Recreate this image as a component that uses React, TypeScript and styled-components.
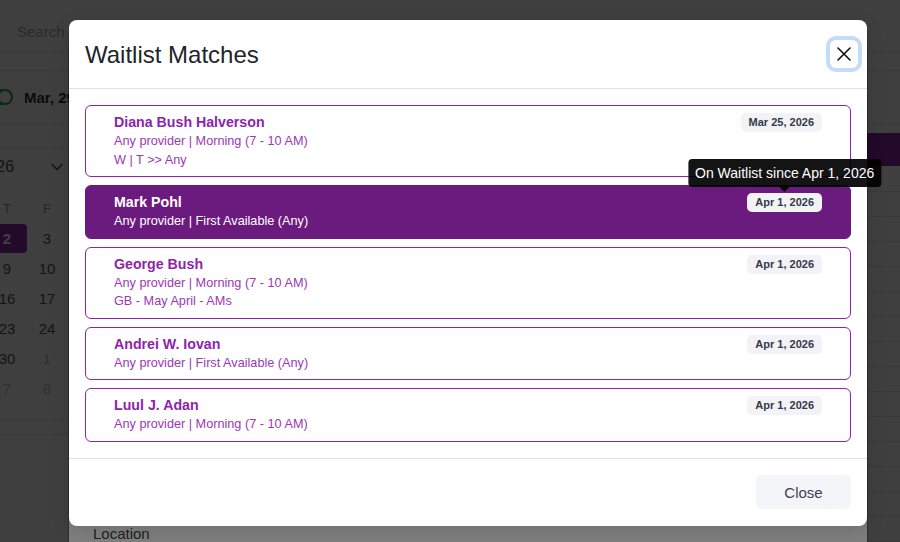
import React from "react";
import styled, { createGlobalStyle } from "styled-components";

const PURPLE = "#8e24aa";
const ACTIVE = "#6b1b7e";

const GlobalStyle = createGlobalStyle`
  html, body { margin: 0; padding: 0; background: #fff; }
  body { font-family: "Liberation Sans", Arial, sans-serif; overflow: hidden; }
  * { box-sizing: border-box; }
`;

const Viewport = styled.div`
  position: relative;
  width: 900px;
  height: 542px;
  overflow: hidden;
  background: #fff;
`;

/* ---------- base page (behind two backdrops) ---------- */
const Page = styled.div`
  display: flex;
  flex-direction: column;
  height: 100%;
  color: #555;
`;

const SearchBar = styled.div`
  height: 53px;
  border-bottom: 1px solid #e2e2e2;
  display: flex;
  align-items: center;
  padding: 10px 0 0 17px;
  font-size: 15px;
  color: #a8a8a8;
  white-space: nowrap;
`;

const SubBar = styled.div`
  height: 18px;
  border-bottom: 1px solid #e2e2e2;
`;

const DateBar = styled.div`
  height: 53px;
  border-bottom: 1px solid #e2e2e2;
  display: flex;
  align-items: center;
  gap: 11px;
  white-space: nowrap;
`;

const Toggle = styled.span`
  position: relative;
  width: 32px;
  height: 16px;
  border-radius: 8px;
  background: #28a745;
  margin-left: -19px;
  flex-shrink: 0;
  &::after {
    content: "";
    position: absolute;
    right: 2px;
    top: 2px;
    width: 12px;
    height: 12px;
    border-radius: 50%;
    background: #fff;
  }
`;

const DateLabel = styled.span`
  font-size: 15px;
  font-weight: 700;
  color: #333;
`;

const Main = styled.div`
  display: flex;
  flex: 1;
`;

const Sidebar = styled.div`
  width: 300px;
  flex-shrink: 0;
  display: flex;
  flex-direction: column;
`;

const SideTop = styled.div`
  height: 24px;
  border-bottom: 1px solid #e2e2e2;
`;

const Calendar = styled.div`
  margin-left: -173px;
  width: 280px;
`;

const MonthHeader = styled.div`
  height: 38px;
  display: flex;
  align-items: center;
  gap: 37px;
  padding-left: 115px;
  font-size: 16px;
  color: #555;
`;

const WeekRow = styled.div`
  margin-top: 7px;
  height: 30px;
  display: grid;
  grid-template-columns: repeat(7, 40px);
  align-items: center;
  justify-items: center;
  font-size: 13px;
  color: #999;
`;

const DayGrid = styled.div`
  display: grid;
  grid-template-columns: repeat(7, 40px);
  grid-auto-rows: 30px;
`;

const Day = styled.div<{ $muted?: boolean; $selected?: boolean }>`
  display: flex;
  align-items: center;
  justify-content: center;
  font-size: 15px;
  margin-top: ${(p) => (p.$selected ? "1px" : "0")};
  border-radius: 4px;
  color: ${(p) => (p.$selected ? "#fff" : p.$muted ? "#c4c4c4" : "#555")};
  background: ${(p) => (p.$selected ? PURPLE : "transparent")};
  font-weight: ${(p) => (p.$selected ? 700 : 400)};
`;

const SideFooter = styled.div`
  margin-top: 16px;
  height: 16px;
  border-top: 1px solid #e2e2e2;
  border-bottom: 1px solid #e2e2e2;
`;

const Schedule = styled.div`
  flex: 1;
  padding-top: 9px;
  display: flex;
  flex-direction: column;
`;

const DayHead = styled.div`
  height: 33px;
  background: ${PURPLE};
  margin-bottom: 1px;
`;

const Slot = styled.div`
  height: 25px;
  border-bottom: 1px solid #e2e2e2;
  flex-shrink: 0;
`;

/* ---------- layers ---------- */
const Backdrop = styled.div`
  position: absolute;
  inset: 0;
  background: rgba(0, 0, 0, 0.5);
`;

const UnderModal = styled.div`
  position: absolute;
  left: 69px;
  top: 28px;
  width: 798px;
  height: 560px;
  background: #fff;
  border-radius: 8px;
  box-shadow: 0 0 0 1px rgba(0, 0, 0, 0.25);
  padding: 497px 24px 0;
`;

const FieldLabel = styled.div`
  font-size: 15px;
  line-height: 18px;
  color: #444;
`;

const Modal = styled.div`
  position: absolute;
  left: 69px;
  top: 20px;
  width: 798px;
  background: #fff;
  border-radius: 8px;
  display: flex;
  flex-direction: column;
  box-shadow: 0 6px 18px rgba(0, 0, 0, 0.12);
`;

const Header = styled.div`
  height: 69px;
  border-bottom: 1px solid #dee2e6;
  display: flex;
  align-items: center;
  justify-content: space-between;
  padding: 0 9px 0 16px;
`;

const Title = styled.h2`
  margin: 0;
  font-size: 24px;
  font-weight: 400;
  line-height: 29px;
  color: #212529;
`;

const IconButton = styled.button`
  width: 28px;
  height: 28px;
  padding: 0;
  border: none;
  border-radius: 6px;
  background: #fff;
  box-shadow: 0 0 0 4px #c5dbfb;
  display: flex;
  align-items: center;
  justify-content: center;
  cursor: pointer;
`;

const Body = styled.div`
  padding: 16px;
  display: flex;
  flex-direction: column;
  gap: 8px;
`;

const Item = styled.div<{ $active?: boolean }>`
  display: flex;
  justify-content: space-between;
  align-items: flex-start;
  border: 1px solid ${(p) => (p.$active ? ACTIVE : PURPLE)};
  background: ${(p) => (p.$active ? ACTIVE : "#fff")};
  border-radius: 6px;
  padding: 7px 28px;
`;

const Info = styled.div`
  display: flex;
  flex-direction: column;
`;

const Name = styled.div<{ $active?: boolean }>`
  font-size: 14.2px;
  font-weight: 700;
  line-height: 19px;
  color: ${(p) => (p.$active ? "#fff" : PURPLE)};
`;

const Detail = styled.div<{ $active?: boolean }>`
  font-size: 12.7px;
  line-height: 18.5px;
  color: ${(p) => (p.$active ? "#fff" : "#9b38b4")};
`;

const BadgeWrap = styled.div`
  position: relative;
  flex-shrink: 0;
`;

const Badge = styled.span`
  display: block;
  background: #f2f3f7;
  color: #343a48;
  font-size: 11px;
  font-weight: 700;
  line-height: 13px;
  padding: 3px 8px;
  border-radius: 5px;
  white-space: nowrap;
`;

const Tooltip = styled.div`
  position: absolute;
  bottom: calc(100% + 6px);
  left: 50%;
  transform: translateX(-50%);
  background: rgba(0, 0, 0, 0.92);
  color: #fff;
  font-size: 14px;
  line-height: 20px;
  padding: 4px 7px;
  border-radius: 4px;
  white-space: nowrap;
  &::after {
    content: "";
    position: absolute;
    top: 100%;
    left: 50%;
    margin-left: -5px;
    border: 5px solid transparent;
    border-top-color: rgba(0, 0, 0, 0.92);
  }
`;

const Footer = styled.div`
  height: 68px;
  border-top: 1px solid #dee2e6;
  display: flex;
  align-items: center;
  justify-content: flex-end;
  padding: 0 16px;
`;

const CloseButton = styled.button`
  width: 95px;
  height: 34px;
  border: none;
  border-radius: 6px;
  background: #f4f5f9;
  color: #3f4254;
  font-family: inherit;
  font-size: 15px;
  cursor: pointer;
`;

type Match = {
  name: string;
  lines: string[];
  date: string;
  active?: boolean;
  tooltip?: string;
};

const matches: Match[] = [
  {
    name: "Diana Bush Halverson",
    lines: ["Any provider | Morning (7 - 10 AM)", "W | T >> Any"],
    date: "Mar 25, 2026",
  },
  {
    name: "Mark Pohl",
    lines: ["Any provider | First Available (Any)"],
    date: "Apr 1, 2026",
    active: true,
    tooltip: "On Waitlist since Apr 1, 2026",
  },
  {
    name: "George Bush",
    lines: ["Any provider | Morning (7 - 10 AM)", "GB - May April - AMs"],
    date: "Apr 1, 2026",
  },
  {
    name: "Andrei W. Iovan",
    lines: ["Any provider | First Available (Any)"],
    date: "Apr 1, 2026",
  },
  {
    name: "Luul J. Adan",
    lines: ["Any provider | Morning (7 - 10 AM)"],
    date: "Apr 1, 2026",
  },
];

type CalDay = { d: number; muted?: boolean; selected?: boolean };
const weeks: CalDay[][] = [
  [{ d: 29, muted: true }, { d: 30, muted: true }, { d: 31, muted: true }, { d: 1 }, { d: 2, selected: true }, { d: 3 }, { d: 4 }],
  [5, 6, 7, 8, 9, 10, 11].map((d) => ({ d })),
  [12, 13, 14, 15, 16, 17, 18].map((d) => ({ d })),
  [19, 20, 21, 22, 23, 24, 25].map((d) => ({ d })),
  [{ d: 26 }, { d: 27 }, { d: 28 }, { d: 29 }, { d: 30 }, { d: 1, muted: true }, { d: 2, muted: true }],
  [3, 4, 5, 6, 7, 8, 9].map((d) => ({ d, muted: true })),
];

const XIcon = () => (
  <svg width="14" height="14" viewBox="0 0 14 14" fill="none">
    <path d="M1 1L13 13M13 1L1 13" stroke="#111" strokeWidth="1.6" strokeLinecap="round" />
  </svg>
);

const ChevronDown = () => (
  <svg width="12" height="8" viewBox="0 0 12 8" fill="none">
    <path d="M1 1.5L6 6.5L11 1.5" stroke="#555" strokeWidth="1.5" strokeLinecap="round" strokeLinejoin="round" />
  </svg>
);

export default function App() {
  return (
    <>
      <GlobalStyle />
      <Viewport>
        <Page>
          <SearchBar>Search | Patients, appointments</SearchBar>
          <SubBar />
          <DateBar>
            <Toggle />
            <DateLabel>Mar, 29 – Apr 4, 2026</DateLabel>
          </DateBar>
          <Main>
            <Sidebar>
              <SideTop />
              <Calendar>
                <MonthHeader>
                  <span>April 2026</span>
                  <ChevronDown />
                </MonthHeader>
                <WeekRow>
                  {["S", "M", "T", "W", "T", "F", "S"].map((w, i) => (
                    <span key={i}>{w}</span>
                  ))}
                </WeekRow>
                <DayGrid>
                  {weeks.flat().map((c, i) => (
                    <Day key={i} $muted={c.muted} $selected={c.selected}>
                      {c.d}
                    </Day>
                  ))}
                </DayGrid>
              </Calendar>
              <SideFooter />
            </Sidebar>
            <Schedule>
              <DayHead />
              {Array.from({ length: 15 }).map((_, i) => (
                <Slot key={i} />
              ))}
            </Schedule>
          </Main>
        </Page>

        <Backdrop />
        <UnderModal>
          <FieldLabel>Location</FieldLabel>
        </UnderModal>
        <Backdrop />

        <Modal role="dialog" aria-label="Waitlist Matches">
          <Header>
            <Title>Waitlist Matches</Title>
            <IconButton aria-label="Close">
              <XIcon />
            </IconButton>
          </Header>
          <Body>
            {matches.map((m) => (
              <Item key={m.name} $active={m.active}>
                <Info>
                  <Name $active={m.active}>{m.name}</Name>
                  {m.lines.map((l) => (
                    <Detail key={l} $active={m.active}>
                      {l}
                    </Detail>
                  ))}
                </Info>
                <BadgeWrap>
                  <Badge>{m.date}</Badge>
                  {m.tooltip && <Tooltip>{m.tooltip}</Tooltip>}
                </BadgeWrap>
              </Item>
            ))}
          </Body>
          <Footer>
            <CloseButton>Close</CloseButton>
          </Footer>
        </Modal>
      </Viewport>
    </>
  );
}
